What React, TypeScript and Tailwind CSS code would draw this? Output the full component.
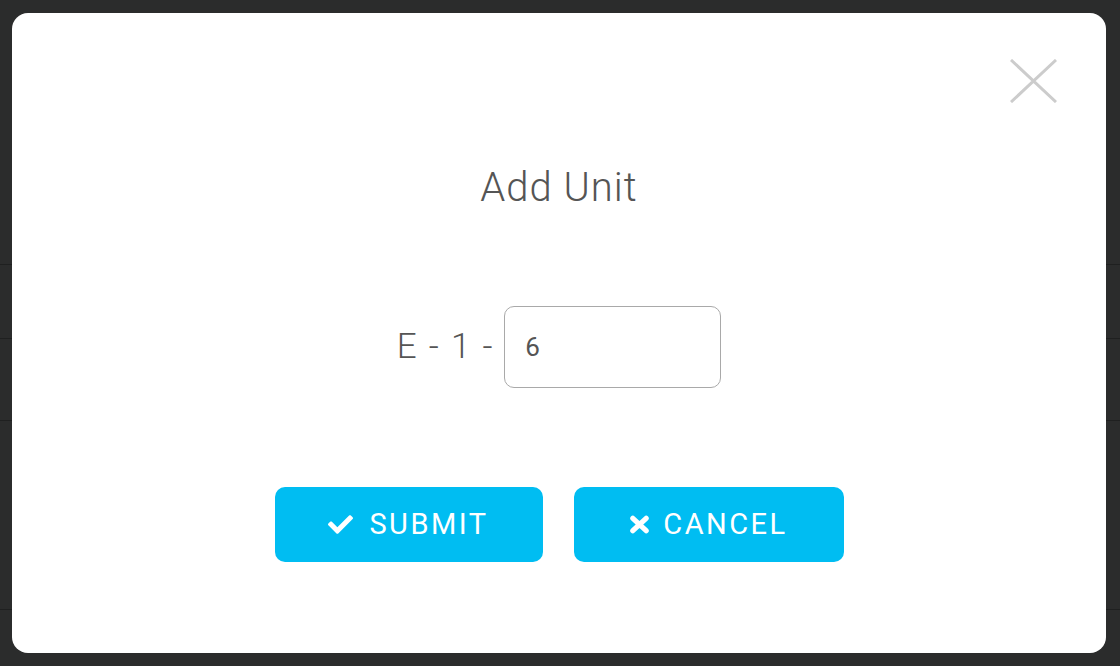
import { FaCheck } from 'react-icons/fa'

const rows = [265, 74, 82, 189]

function App() {
  return (
    <div className="relative h-[666px] w-[1120px] overflow-hidden bg-[#2b2c2c]" style={{ fontFamily: 'Roboto, "Liberation Sans", sans-serif' }}>
      {/* Page behind the overlay */}
      <div className="flex flex-col">
        {rows.map((h, i) => (
          <div key={i} className="border-b border-[#1f2020]" style={{ height: h }} />
        ))}
      </div>

      {/* Modal */}
      <div className="absolute left-[12px] top-[13px] flex h-[640px] w-[1094px] flex-col items-center rounded-[16px] bg-white pt-[151px]">
        <button className="absolute right-[49px] top-[46px] h-[44px] w-[47px] text-[#cccccc]">
          <svg viewBox="0 0 47 44" className="h-full w-full" fill="none" stroke="currentColor" strokeWidth="3">
            <path d="M1 1 L46 43 M46 1 L1 43" />
          </svg>
        </button>

        <h2 className="text-[40px] font-light leading-[48px] tracking-[1px] text-[#555555]">Add Unit</h2>

        <div className="mt-[94px] flex items-center">
          <span className="text-[35px] font-light tracking-[1.8px] text-[#555555]">E - 1 -</span>
          <input
            defaultValue="6"
            className="ml-[10px] h-[82px] w-[217px] rounded-[10px] border-[1.5px] border-[#a9a9a9] pl-[20px] text-[26px] text-[#555555] outline-none"
          />
        </div>

        <div className="mt-[99px] flex gap-[31px]">
          <button className="flex h-[75px] w-[268px] items-center justify-center gap-[16px] rounded-[10px] bg-[#00bdf2] text-[29px] tracking-[2.5px] text-white">
            <FaCheck className="h-[25px] w-[25px]" />
            SUBMIT
          </button>
          <button className="flex h-[75px] w-[270px] items-center justify-center gap-[13px] rounded-[10px] bg-[#00bdf2] text-[29px] tracking-[2.5px] text-white">
            <svg viewBox="0 0 22 20" className="h-[19px] w-[21px]" fill="none" stroke="currentColor" strokeWidth="5.5" strokeLinecap="round">
              <path d="M4 3.5 L18 16.5 M18 3.5 L4 16.5" />
            </svg>
            CANCEL
          </button>
        </div>
      </div>
    </div>
  )
}

export default App
